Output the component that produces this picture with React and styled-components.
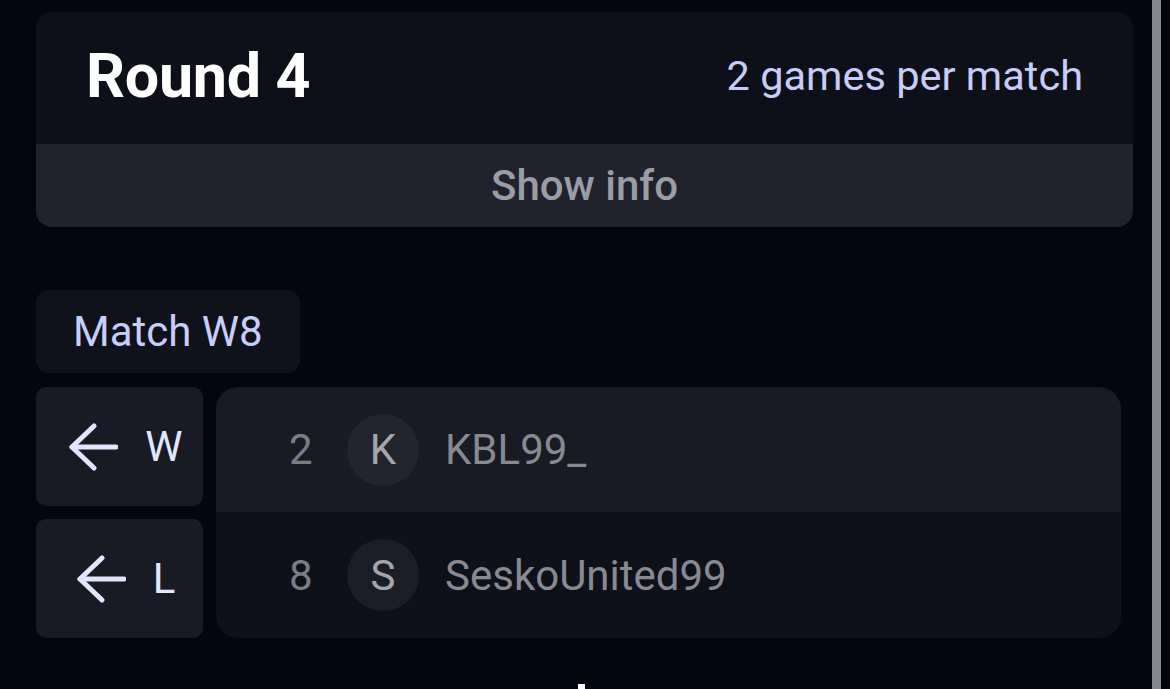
import styled, { createGlobalStyle } from 'styled-components';

const GlobalStyle = createGlobalStyle`
    html, body {
        margin: 0;
        padding: 0;
        background: #03060f;
        height: 689px;
        overflow: hidden;
    }
    body {
        font-family: Roboto, "Liberation Sans", sans-serif;
    }
`;

const Page = styled.div`
    display: flex;
    height: 689px;
    overflow: hidden;
`;

const Main = styled.div`
    flex: 1;
    min-width: 0;
    padding: 12px 19px 0 36px;
    display: flex;
    flex-direction: column;

    & > * {
        flex-shrink: 0;
    }
`;

const ScrollThumb = styled.div`
    flex-shrink: 0;
    width: 9px;
    margin-right: 9px;
    background: #86878c;
`;

const RoundCard = styled.section`
    border-radius: 16px;
    overflow: hidden;
`;

const RoundHeader = styled.div`
    height: 132px;
    box-sizing: border-box;
    padding: 0 50px 5px;
    display: flex;
    align-items: center;
    justify-content: space-between;
    background: #0e1019;
`;

const RoundTitle = styled.h1`
    margin: 0;
    font-size: 61px;
    font-weight: 700;
    color: #ffffff;
    letter-spacing: -0.3px;
`;

const GamesInfo = styled.span`
    font-size: 41.5px;
    color: #c7cdf6;
`;

const ShowInfo = styled.button`
    display: block;
    width: 100%;
    height: 83px;
    border: 0;
    background: #20222d;
    font-family: inherit;
    font-size: 42px;
    font-weight: 500;
    color: #9b9da6;
    padding: 0;
`;

const MatchLabel = styled.div`
    margin-top: 63px;
    align-self: flex-start;
    height: 83px;
    padding: 0 37px;
    display: flex;
    align-items: center;
    border-radius: 13px;
    background: #10121b;
    font-size: 42px;
    color: #c8cefa;
`;

const Bracket = styled.div`
    margin-top: 14px;
    margin-right: 12px;
    display: flex;
    gap: 13px;
`;

const SideColumn = styled.div`
    width: 167px;
    flex-shrink: 0;
    display: flex;
    flex-direction: column;
    gap: 13px;
`;

const SideButton = styled.div`
    height: 119px;
    border-radius: 10px;
    background: #181a24;
    display: flex;
    align-items: center;
    justify-content: center;
    gap: 27px;
    padding-left: 12px;
    font-size: 42px;
    color: #e3e6ff;
`;

const MatchCard = styled.div`
    flex: 1;
    border-radius: 22px;
    overflow: hidden;
`;

const PlayerRow = styled.div`
    height: ${p => (p.$top ? 125 : 126)}px;
    background: ${p => (p.$top ? '#181a24' : '#0f111a')};
    display: flex;
    align-items: center;
    padding-left: 73px;
`;

const Score = styled.span`
    width: 58px;
    font-size: 42px;
    color: #7b7d86;
`;

const Avatar = styled.div`
    width: 72px;
    height: 72px;
    border-radius: 50%;
    background: ${p => (p.$top ? '#22242e' : '#1b1d27')};
    display: flex;
    align-items: center;
    justify-content: center;
    font-size: 42px;
    color: #a4a6ae;
`;

const PlayerName = styled.span`
    margin-left: 26px;
    font-size: 42px;
    color: #878993;
`;

const NextMark = styled.div`
    margin: 46px auto 0;
    width: 7px;
    height: 20px;
    background: #ffffff;
    transform: translateX(-3px);
`;

const ArrowLeft = () => (
    <svg width="50" height="48" viewBox="0 0 50 48" fill="none">
        <path d="M4 24 H48" stroke="#e3e6ff" strokeWidth="5" strokeLinecap="round" />
        <path d="M26 3 L4 24 L26 45" stroke="#e3e6ff" strokeWidth="5" strokeLinecap="round" strokeLinejoin="round" />
    </svg>
);

const players = [
    { score: 2, initial: 'K', name: 'KBL99_' },
    { score: 8, initial: 'S', name: 'SeskoUnited99' },
];

const App = () => {
    return (
        <>
            <GlobalStyle />
            <Page>
                <Main>
                    <RoundCard>
                        <RoundHeader>
                            <RoundTitle>Round 4</RoundTitle>
                            <GamesInfo>2 games per match</GamesInfo>
                        </RoundHeader>
                        <ShowInfo>Show info</ShowInfo>
                    </RoundCard>

                    <MatchLabel>Match W8</MatchLabel>

                    <Bracket>
                        <SideColumn>
                            <SideButton><ArrowLeft /><span>W</span></SideButton>
                            <SideButton><ArrowLeft /><span>L</span></SideButton>
                        </SideColumn>
                        <MatchCard>
                            {players.map((pl, i) => (
                                <PlayerRow key={pl.name} $top={i === 0}>
                                    <Score>{pl.score}</Score>
                                    <Avatar $top={i === 0}>{pl.initial}</Avatar>
                                    <PlayerName>{pl.name}</PlayerName>
                                </PlayerRow>
                            ))}
                        </MatchCard>
                    </Bracket>

                    <NextMark />
                </Main>
                <ScrollThumb />
            </Page>
        </>
    );
};

export default App;
